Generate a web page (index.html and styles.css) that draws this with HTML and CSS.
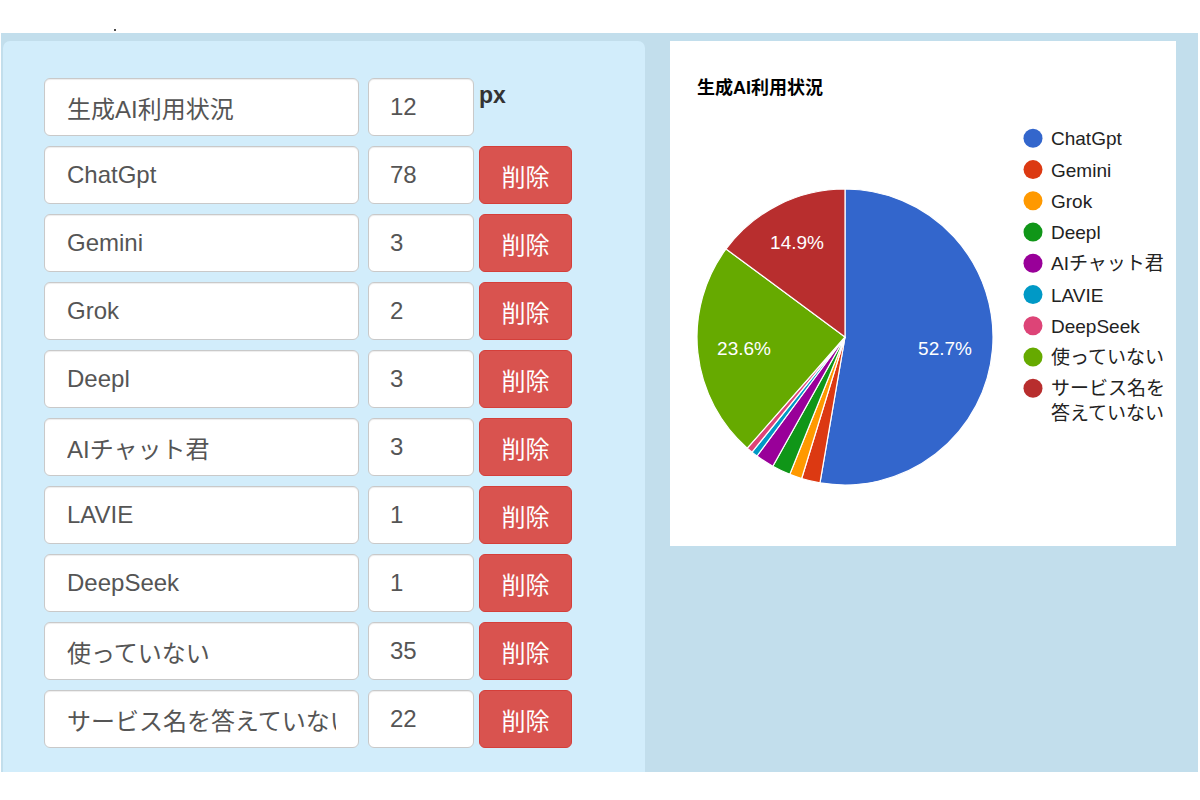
FILE: index.html
```html
<!DOCTYPE html>
<html lang="ja">
<head>
<meta charset="utf-8">
<title>生成AI利用状況</title>
<link rel="stylesheet" href="styles.css">
</head>
<body>
<div class="topbar"><span class="dot"></span></div>
<div class="main">
  <section class="editor">
    <div class="row">
      <input class="name" type="text" value="生成AI利用状況">
      <input class="num" type="number" value="12">
      <span class="unit">px</span>
    </div>
    <div class="row">
      <input class="name" type="text" value="ChatGpt">
      <input class="num" type="number" value="78">
      <button class="del">削除</button>
    </div>
    <div class="row">
      <input class="name" type="text" value="Gemini">
      <input class="num" type="number" value="3">
      <button class="del">削除</button>
    </div>
    <div class="row">
      <input class="name" type="text" value="Grok">
      <input class="num" type="number" value="2">
      <button class="del">削除</button>
    </div>
    <div class="row">
      <input class="name" type="text" value="Deepl">
      <input class="num" type="number" value="3">
      <button class="del">削除</button>
    </div>
    <div class="row">
      <input class="name" type="text" value="AIチャット君">
      <input class="num" type="number" value="3">
      <button class="del">削除</button>
    </div>
    <div class="row">
      <input class="name" type="text" value="LAVIE">
      <input class="num" type="number" value="1">
      <button class="del">削除</button>
    </div>
    <div class="row">
      <input class="name" type="text" value="DeepSeek">
      <input class="num" type="number" value="1">
      <button class="del">削除</button>
    </div>
    <div class="row">
      <input class="name" type="text" value="使っていない">
      <input class="num" type="number" value="35">
      <button class="del">削除</button>
    </div>
    <div class="row">
      <input class="name" type="text" value="サービス名を答えていない">
      <input class="num" type="number" value="22">
      <button class="del">削除</button>
    </div>
  </section>
  <section class="chart-box">
    <svg class="chart" width="506" height="505" viewBox="0 0 506 505">
      <text class="title" x="27" y="53">生成AI利用状況</text>
      <g class="slices">
        <path fill="#3366cc" d="M175,296 L175,148 A148,148 0 1 1 149.99,441.87 Z"/>
        <path fill="#dc3912" d="M175,296 L149.99,441.87 A148,148 0 0 1 131.66,437.51 Z"/>
        <path fill="#ff9900" d="M175,296 L131.66,437.51 A148,148 0 0 1 119.82,433.33 Z"/>
        <path fill="#109618" d="M175,296 L119.82,433.33 A148,148 0 0 1 102.82,425.21 Z"/>
        <path fill="#990099" d="M175,296 L102.82,425.21 A148,148 0 0 1 86.99,414.99 Z"/>
        <path fill="#0099c6" d="M175,296 L86.99,414.99 A148,148 0 0 1 82.02,411.15 Z"/>
        <path fill="#dd4477" d="M175,296 L82.02,411.15 A148,148 0 0 1 77.22,407.10 Z"/>
        <path fill="#66aa00" d="M175,296 L77.22,407.10 A148,148 0 0 1 56.02,207.98 Z"/>
        <path fill="#b82e2e" d="M175,296 L56.02,207.98 A148,148 0 0 1 175,148 Z"/>
      </g>
      <g class="pct">
        <text x="275" y="314">52.7%</text>
        <text x="74" y="314">23.6%</text>
        <text x="127" y="208">14.9%</text>
      </g>
      <g class="legend">
        <circle cx="363" cy="97.3" r="9.5" fill="#3366cc"/>
        <text x="381" y="104.3">ChatGpt</text>
        <circle cx="363" cy="128.6" r="9.5" fill="#dc3912"/>
        <text x="381" y="135.6">Gemini</text>
        <circle cx="363" cy="159.8" r="9.5" fill="#ff9900"/>
        <text x="381" y="166.8">Grok</text>
        <circle cx="363" cy="191.1" r="9.5" fill="#109618"/>
        <text x="381" y="198.1">Deepl</text>
        <circle cx="363" cy="222.3" r="9.5" fill="#990099"/>
        <text x="381" y="229.3">AIチャット君</text>
        <circle cx="363" cy="253.6" r="9.5" fill="#0099c6"/>
        <text x="381" y="260.6">LAVIE</text>
        <circle cx="363" cy="284.8" r="9.5" fill="#dd4477"/>
        <text x="381" y="291.8">DeepSeek</text>
        <circle cx="363" cy="316.1" r="9.5" fill="#66aa00"/>
        <text x="381" y="323.1">使っていない</text>
        <circle cx="363" cy="347.3" r="9.5" fill="#b82e2e"/>
        <text x="381" y="354.3">サービス名を</text>
        <text x="381" y="379.3">答えていない</text>
      </g>
    </svg>
  </section>
</div>
</body>
</html>
```
FILE: styles.css
```css
html, body {
  margin: 0;
  padding: 0;
  background: #ffffff;
  font-family: "Liberation Sans", "Noto Sans CJK JP", sans-serif;
}

.topbar {
  height: 33px;
  position: relative;
}

.dot {
  position: absolute;
  left: 114px;
  top: 29px;
  width: 2px;
  height: 2px;
  background: #111;
  border-radius: 1px;
}

.main {
  display: flex;
  align-items: flex-start;
  margin-left: 1px;
  width: 1197px;
  height: 739px;
  box-sizing: border-box;
  padding: 8px 0 0 2px;
  background: #c2deec;
}

.editor {
  width: 642px;
  height: 731px;
  box-sizing: border-box;
  padding: 37px 0 0 41px;
  background: #d2edfb;
  border-radius: 7px 7px 0 0;
}

.row {
  display: flex;
  align-items: flex-start;
  height: 58px;
  margin-bottom: 10px;
}

.name,
.num {
  box-sizing: border-box;
  height: 58px;
  padding: 0 21px;
  border: 1px solid #c9c9c9;
  border-radius: 6px;
  background: #ffffff;
  box-shadow: inset 0 1px 1px rgba(0, 0, 0, 0.075);
  font-family: "Liberation Sans", "Noto Sans CJK JP", sans-serif;
  font-size: 24px;
  color: #555555;
  outline: none;
}

.name {
  width: 315px;
  padding-left: 22px;
  padding-right: 22px;
}

.num {
  width: 106px;
  margin-left: 9px;
  -moz-appearance: textfield;
}

.num::-webkit-inner-spin-button,
.num::-webkit-outer-spin-button {
  -webkit-appearance: none;
  margin: 0;
}

.unit {
  margin: 6px 0 0 5px;
  font-size: 23px;
  line-height: 23px;
  font-weight: bold;
  color: #333333;
}

.del {
  box-sizing: border-box;
  width: 93px;
  height: 58px;
  margin-left: 5px;
  padding: 0;
  border: 1px solid #d43f3a;
  border-radius: 6px;
  background: #d9534f;
  color: #ffffff;
  font-family: "Liberation Sans", "Noto Sans CJK JP", sans-serif;
  font-size: 24px;
}

.chart-box {
  width: 506px;
  height: 505px;
  margin-left: 25px;
  background: #ffffff;
}

.chart {
  display: block;
  font-family: "Liberation Sans", "Noto Sans CJK JP", sans-serif;
}

.title {
  font-size: 18px;
  font-weight: bold;
  fill: #000000;
}

.slices path {
  stroke: #ffffff;
  stroke-width: 1.2;
}

.pct text {
  font-size: 19px;
  fill: #ffffff;
  text-anchor: middle;
}

.legend text {
  font-size: 19px;
  fill: #222222;
}
```
